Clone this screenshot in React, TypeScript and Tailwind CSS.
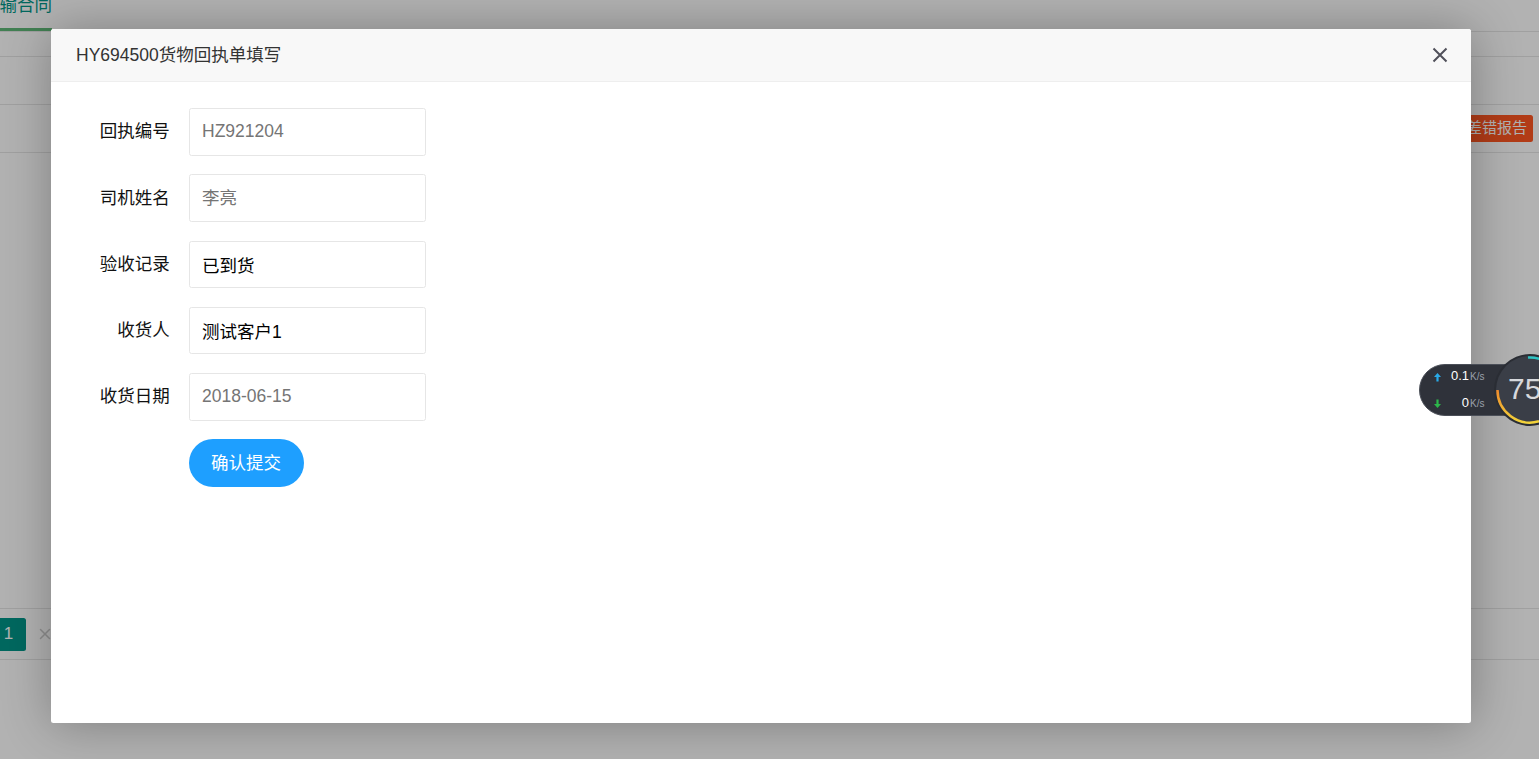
import { X } from "lucide-react";

const font = { fontFamily: '"Liberation Sans", "Noto Sans CJK SC", sans-serif' };

const fields = [
  { label: "回执编号", placeholder: "HZ921204" },
  { label: "司机姓名", placeholder: "李亮" },
  { label: "验收记录", value: "已到货" },
  { label: "收货人", value: "测试客户1" },
  { label: "收货日期", placeholder: "2018-06-15" },
];

const BackgroundPage = () => (
  <div className="flex h-full flex-col bg-white">
    <div className="h-[32px] border-b border-[#e6e6e6]">
      <div className="ml-[-18px] flex h-[31px] w-[70px] items-start overflow-hidden border-b-[3px] border-[#5FB878]">
        <span className="mt-[-7px] text-[17.5px] leading-[25px] text-[#009688]">运输合同</span>
      </div>
    </div>
    <div className="h-[25px] border-b border-[#e6e6e6]" />
    <div className="h-[48px] border-b border-[#e6e6e6]" />
    <div className="flex h-[48px] items-center justify-end border-b border-[#e6e6e6] pr-[6px]">
      <button className="h-[27.5px] rounded-[2.5px] bg-[#FF5722] px-[6px] text-[15px] text-white">差错报告</button>
    </div>
    <div className="h-[455px]" />
    <div className="flex h-[52px] items-center border-y border-[#e6e6e6]">
      <span className="ml-[-9px] flex h-[33px] w-[35px] items-center justify-center rounded-[2.5px] bg-[#009688] text-[17px] text-white">
        1
      </span>
      <X className="ml-[10px] h-[18px] w-[18px] text-[#cccccc]" strokeWidth={2} />
    </div>
  </div>
);

const SpeedBall = () => (
  <div className="absolute left-[1419px] top-[353px] flex h-[74px] items-center">
    <div className="flex h-[52px] w-[110px] flex-col justify-center gap-[12px] rounded-l-full border border-[#4b4f58] bg-[#2f323a] pl-[13px] text-[13px] leading-[14px]">
      <div className="flex items-baseline">
        <svg width="9" height="10" viewBox="0 0 9 10" className="mr-[5px] self-center">
          <path d="M4.5 1 L8 5 H5.6 V9.5 H3.4 V5 H1 Z" fill="#29a9e6" />
        </svg>
        <span className="w-[22px] text-right text-white">0.1</span>
        <span className="ml-[1px] text-[10px] text-[#9aa0aa]">K/s</span>
      </div>
      <div className="flex items-baseline">
        <svg width="9" height="10" viewBox="0 0 9 10" className="mr-[5px] self-center">
          <path d="M4.5 9 L8 5 H5.6 V0.5 H3.4 V5 H1 Z" fill="#2cb84a" />
        </svg>
        <span className="w-[22px] text-right text-white">0</span>
        <span className="ml-[1px] text-[10px] text-[#9aa0aa]">K/s</span>
      </div>
    </div>
  </div>
);

const SpeedCircle = () => (
  <div className="absolute left-[1493px] top-[353px] h-[74px] w-[74px]">
    <svg width="74" height="74" viewBox="0 0 74 74" className="absolute inset-0">
      <defs>
        <linearGradient id="ring" x1="0" y1="0" x2="0" y2="1">
          <stop offset="0" stopColor="#f08a2a" />
          <stop offset="1" stopColor="#f2d33a" />
        </linearGradient>
      </defs>
      <circle cx="37" cy="37" r="36" fill="#2a2d34" />
      <circle cx="37" cy="37" r="34" fill="#3a3e47" />
      <path d="M35 4.5 A32.5 32.5 0 0 1 47 6" stroke="#2ec4c4" strokeWidth="2.5" fill="none" />
      <path d="M4.5 37 A32.5 32.5 0 0 0 46 68.3" stroke="url(#ring)" strokeWidth="2.5" fill="none" />
    </svg>
    <span className="absolute left-[15px] top-[19px] text-[30px] font-light leading-[34px] text-[#d6d8dc]">75</span>
  </div>
);

export default function App() {
  return (
    <div className="relative h-[759px] w-full overflow-hidden" style={font}>
      <BackgroundPage />
      <div className="absolute inset-0 bg-black/30" />

      <div className="absolute left-[51px] top-[29px] flex h-[694px] w-[1420px] flex-col rounded-[2.5px] bg-white shadow-[1px_1px_50px_rgba(0,0,0,0.3)]">
        <div className="flex h-[53px] items-center justify-between rounded-t-[2.5px] border-b border-[#eeeeee] bg-[#F8F8F8] pl-[25px] pr-[22px]">
          <span className="text-[17.5px] text-[#333333]">HY694500货物回执单填写</span>
          <svg width="18" height="18" viewBox="0 0 18 18">
            <path d="M2.5 2.5 L15.5 15.5 M15.5 2.5 L2.5 15.5" stroke="#50505a" strokeWidth="2" />
          </svg>
        </div>

        <form className="pt-[26px]">
          {fields.map((f) => (
            <div key={f.label} className="mb-[18.75px] flex items-center">
              <label className="w-[137.5px] pr-[18.75px] text-right text-[17.5px] leading-[25px] text-[#111111]">
                {f.label}
              </label>
              <input
                readOnly
                defaultValue={f.value}
                placeholder={f.placeholder}
                className="h-[47.5px] w-[237.5px] rounded-[2.5px] border border-[#e6e6e6] bg-white px-[12.5px] text-[17.5px] text-black outline-none placeholder:text-[#757575]"
              />
            </div>
          ))}
          <div className="pl-[137.5px]">
            <button
              type="button"
              className="h-[47.5px] rounded-full bg-[#1E9FFF] px-[22.5px] text-[17.5px] text-white"
            >
              确认提交
            </button>
          </div>
        </form>
      </div>

      <SpeedBall />
      <SpeedCircle />
    </div>
  );
}
